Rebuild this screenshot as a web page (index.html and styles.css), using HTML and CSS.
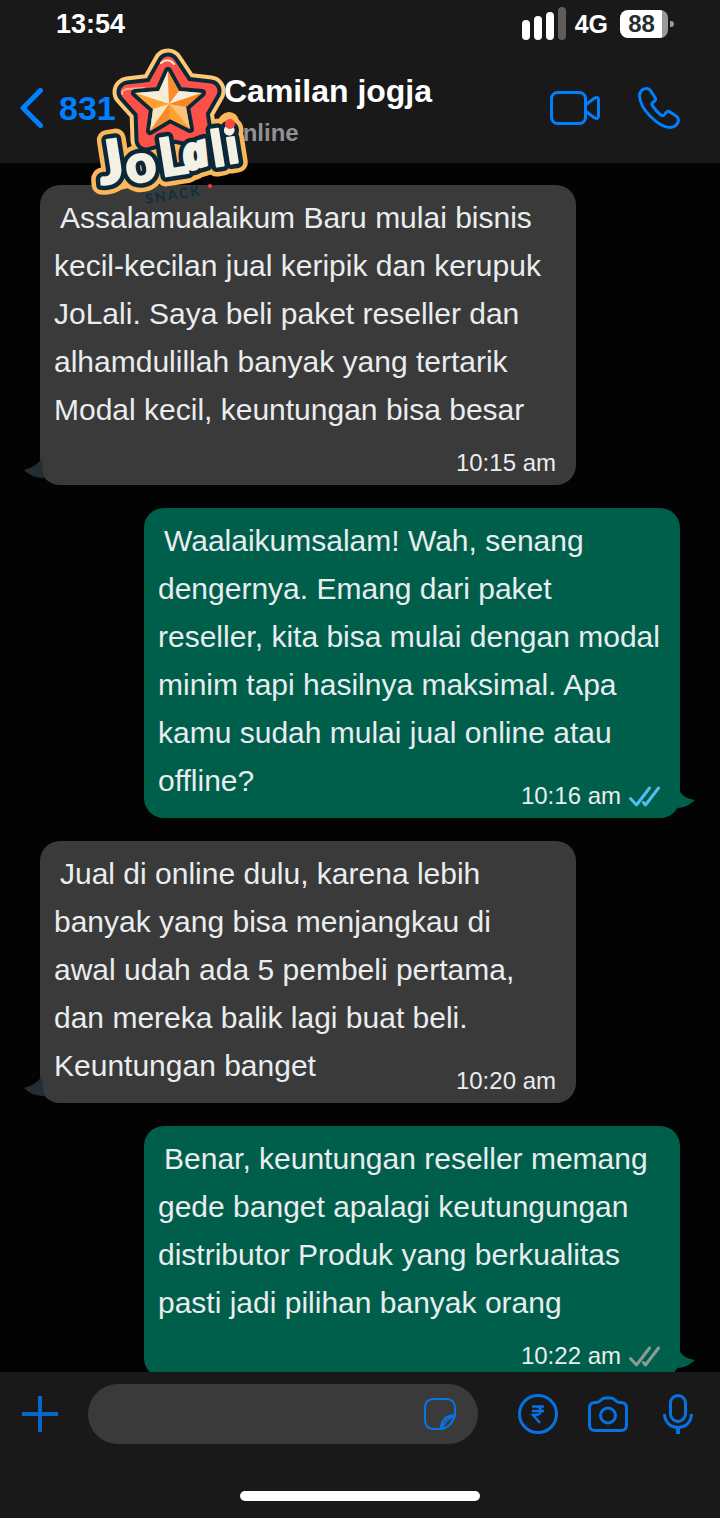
FILE: index.html
```html
<!DOCTYPE html>
<html lang="id">
<head>
  <meta charset="UTF-8" />
  <meta name="viewport" content="width=device-width, initial-scale=1" />
  <title>Camilan jogja</title>
  <link rel="stylesheet" href="styles.css">
</head>
<body>

  <header class="header">
    <div class="status-bar">
      <span class="clock">13:54</span>
      <div class="status-right">
        <svg class="signal" width="44" height="34" viewBox="0 0 44 34">
          <g fill="#fff">
            <rect x="0" y="13" width="8" height="20" rx="4"/>
            <rect x="12" y="9" width="8" height="24" rx="4"/>
            <rect x="24" y="5" width="8" height="28" rx="4"/>
          </g>
          <rect x="36" y="0" width="8" height="33" rx="4" fill="#5d5d5d"/>
        </svg>
        <span class="network">4G</span>
        <span class="battery">88</span>
      </div>
    </div>

    <div class="nav">
      <a class="back" href="#">
        <svg width="24" height="40" viewBox="0 0 24 40" fill="none" stroke="#007fff" stroke-width="5" stroke-linecap="round" stroke-linejoin="round"><path d="M20.500 2.500L3 20L20.500 37.500"/></svg>
        831
      </a>
      <div class="contact">
        <h1>Camilan jogja</h1>
        <p>Online</p>
      </div>
      <button class="icon-btn" aria-label="Video call">
        <svg width="50" height="34" viewBox="0 0 50 34" fill="none" stroke="#007fff" stroke-width="3" stroke-linejoin="round"><rect x="1.500" y="1.500" width="34" height="31" rx="6"/><path d="M35.500 14L44 7.500Q48.500 5 48.500 9V25Q48.500 29 44 26.500L35.500 20Z"/></svg>
      </button>
      <button class="icon-btn" aria-label="Call">
        <svg width="42" height="42" viewBox="0 0 42 42" fill="none" stroke="#007fff" stroke-width="3" stroke-linejoin="round"><path d="M8 1.500C4 1.500 1.500 5 1.500 9C2 17 7 24 12.500 29.500C18 35 25 40.500 32 40.500C37 40.500 40.500 36.500 40.500 33C40.500 31 39.500 30 38 29L32 25C30.500 24 29 24.300 28 25.600L26.500 27.600C25.500 29 24.500 29 23.200 28.200C20 26 17 22.500 14.300 18.500C13.500 17 13.500 16.500 14.800 15.400L16.600 14C18 12.800 17.700 11.500 16.800 10.200L12.500 3.500C11.500 2 10 1.500 8 1.500Z"/></svg>
      </button>
    </div>

    <svg class="logo" width="180" height="180" viewBox="0 0 180 180" role="img" aria-label="JoLali Snack">
      <defs>
        <path id="star" d="M88 24L104 48L130 51L118 72L122 98L95 92L66 100L65 71L48 52L74 49Z"/>
        <g id="word" font-family="Lato, 'Open Sans', sans-serif" font-weight="900">
          <text font-size="60" transform="translate(21 145) rotate(-9)">J</text>
          <text font-size="53" transform="translate(48 144) rotate(-9)">o</text>
          <text font-size="53" transform="translate(82 137) rotate(-9)">L</text>
          <text font-size="46" font-family="'Open Sans', sans-serif" font-weight="800" font-style="italic" transform="translate(106 132) rotate(-18)">a</text>
          <text font-size="50" transform="translate(134 127) rotate(-9)">l</text>
          <text font-size="50" transform="translate(148 124) rotate(-9)">i</text>
        </g>
      </defs>
      <g stroke-linejoin="round" stroke-linecap="round">
        <use href="#star" fill="#ffc875" stroke="#ffc875" stroke-width="31"/>
        <use href="#word" fill="#fdb75b" stroke="#fdb75b" stroke-width="20"/>
        <path d="M38 136L142 112" stroke="#fdb75b" stroke-width="28"/>
        <path d="M120 114L149 82L153 114Z" fill="#fdb75b" stroke="#fdb75b" stroke-width="20"/>
        <use href="#star" fill="#0b2838" stroke="#0b2838" stroke-width="23"/>
        <use href="#star" fill="#fb5148" stroke="#fb5148" stroke-width="15"/>
        <path d="M81 23Q88 17 94 24" fill="none" stroke="#fff0d6" stroke-width="2"/>
        <path d="M42 54Q42 50 47 49L64 48" fill="none" stroke="#ffb09b" stroke-width="2"/>
        <path d="M88 31L99 51L122 53L106 67L110 89L90 79L70 91L73 69L55 53L79 51Z" fill="#0b2838" stroke="#0b2838" stroke-width="8"/>
      </g>
      <g>
        <path d="M88 31L99 51L122 53L106 67L110 89L90 79L70 91L73 69L55 53L79 51Z" fill="#ffa12e"/>
        <path d="M88 31L79 51L89 64Z" fill="#f5eedc"/>
        <path d="M88 31L99 51L89 64Z" fill="#f98d2c"/>
        <path d="M55 53L79 51L89 64Z" fill="#f5eedc"/>
        <path d="M55 53L73 69L89 64Z" fill="#ffa12e"/>
        <path d="M122 53L99 51L89 64Z" fill="#f5eedc"/>
        <path d="M122 53L106 67L89 64Z" fill="#f98422"/>
        <path d="M70 91L73 69L89 64Z" fill="#f7e5c4"/>
        <path d="M70 91L90 79L89 64Z" fill="#f98d2c"/>
        <path d="M110 89L106 67L89 64Z" fill="#fcc27b"/>
        <path d="M110 89L90 79L89 64Z" fill="#ffa12e"/>
      </g>
      <g stroke-linejoin="round">
        <use href="#word" fill="#0b2838" stroke="#0b2838" stroke-width="11"/>
        <use href="#word" fill="#f3f0e4" stroke="#f3f0e4" stroke-width="2"/>
      </g>
      <circle cx="150" cy="84" r="5" fill="#f6483f"/>
      <text class="logo-sub" transform="translate(66 164) rotate(-9)">SNACK</text>
      <circle cx="130" cy="146" r="2" fill="#fb3b35"/>
    </svg>
  </header>

  <main class="chat">
    <div class="bubble received">
      <p>Assalamualaikum Baru mulai bisnis kecil-kecilan jual keripik dan kerupuk JoLali. Saya beli paket reseller dan alhamdulillah banyak yang tertarik Modal kecil, keuntungan bisa besar</p>
      <div class="meta">10:15 am</div>
      <svg class="tail" width="20" height="22" viewBox="0 0 20 22"><path d="M18 0C16 6 8 11 0 13C6 19 13 21 20 21Q18 10 18 0Z" fill="#232d34"/></svg>
    </div>

    <div class="bubble sent">
      <p>Waalaikumsalam! Wah, senang dengernya. Emang dari paket reseller, kita bisa mulai dengan modal minim tapi hasilnya maksimal. Apa kamu sudah mulai jual online atau offline?</p>
      <div class="meta beside">10:16 am
        <svg class="ticks read" width="31" height="21" viewBox="0 0 31 21"><path d="M1.500 12.500L7.500 19L20.500 2M14.500 16.500L16.500 19L29.500 2"/></svg>
      </div>
      <svg class="tail" width="20" height="22" viewBox="0 0 20 22"><path d="M3 0C6 6 12 9 19 10C14 15 8 18 0 18Z" fill="#005f4b"/></svg>
    </div>

    <div class="bubble received">
      <p>Jual di online dulu, karena lebih banyak yang bisa menjangkau di awal udah ada 5 pembeli pertama, dan mereka balik lagi buat beli. Keuntungan banget</p>
      <div class="meta beside">10:20 am</div>
      <svg class="tail" width="20" height="22" viewBox="0 0 20 22"><path d="M18 0C16 6 8 11 0 13C6 19 13 21 20 21Q18 10 18 0Z" fill="#232d34"/></svg>
    </div>

    <div class="bubble sent">
      <p>Benar, keuntungan reseller memang gede banget apalagi keutungungan distributor Produk yang berkualitas pasti jadi pilihan banyak orang</p>
      <div class="meta">10:22 am
        <svg class="ticks" width="31" height="21" viewBox="0 0 31 21"><path d="M1.500 12.500L7.500 19L20.500 2M14.500 16.500L16.500 19L29.500 2"/></svg>
      </div>
      <svg class="tail" width="20" height="22" viewBox="0 0 20 22"><path d="M3 0C6 6 12 9 19 10C14 15 8 18 0 18Z" fill="#005f4b"/></svg>
    </div>
  </main>

  <footer class="footer">
    <div class="composer">
      <button class="icon-btn" aria-label="Tambah">
        <svg width="36" height="36" viewBox="0 0 36 36" stroke="#0a66c8" stroke-width="4"><path d="M18 0V36M0 18H36"/></svg>
      </button>
      <div class="field">
        <input type="text" aria-label="Pesan">
        <button class="icon-btn" aria-label="Stiker">
          <svg width="32" height="32" viewBox="0 0 32 32" fill="none" stroke="#0874e6" stroke-width="2" stroke-linejoin="round"><path d="M10 1H22C28 1 31 5 31 10V18C27 27 24 30 17 31H10C4 31 1 28 1 22V10C1 4 4 1 10 1Z"/><path d="M17 31Q17 18 31 17M18 30Q22 20 31 18"/></svg>
        </button>
      </div>
      <button class="icon-btn" aria-label="Pembayaran">
        <svg width="40" height="40" viewBox="0 0 40 40" fill="none" stroke="#0672e4" stroke-width="3"><circle cx="20" cy="20" r="18.500"/><path d="M14 12.500H26M14 17H26M15 12.500H18C24.500 12.500 24.500 21 18 21H15L22 29" stroke-width="2.500"/></svg>
      </button>
      <button class="icon-btn" aria-label="Kamera">
        <svg width="40" height="40" viewBox="0 0 40 40" fill="none" stroke="#0672e4" stroke-width="3" stroke-linejoin="round"><path d="M7 8.500H9C12 8.500 13 4 17 4H23C27 4 28 8.500 31 8.500H33Q38.500 8.500 38.500 14V31Q38.500 36.500 33 36.500H7Q1.500 36.500 1.500 31V14Q1.500 8.500 7 8.500Z"/><circle cx="20" cy="21.500" r="7.500"/></svg>
      </button>
      <button class="icon-btn" aria-label="Rekam suara">
        <svg width="30" height="40" viewBox="0 0 30 40" fill="none" stroke="#0672e4" stroke-width="3"><rect x="7.500" y="1.500" width="15" height="26" rx="7.500"/><path d="M1.500 20C2 38 28 38 28.500 20"/><path d="M15 33V40" stroke-width="4"/></svg>
      </button>
    </div>
    <div class="home-bar"></div>
  </footer>

</body>
</html>
```
FILE: styles.css
```css
* {
  box-sizing: border-box;
}
body {
  margin: 0;
  height: 100vh;
  display: flex;
  flex-direction: column;
  background: #030303;
  color: #e9edef;
  font-family: "Liberation Sans", Arial, sans-serif;
}
h1, p {
  margin: 0;
}
svg {
  display: block;
  flex: none;
}
button {
  flex: none;
  padding: 0;
  border: none;
  background: none;
  cursor: pointer;
}

/* header */
.header {
  position: relative;
  z-index: 1;
  background: #191919;
  padding-bottom: 12px;
}
.status-bar {
  display: flex;
  justify-content: space-between;
  align-items: center;
  height: 48px;
  padding: 0 52px 0 56px;
  color: #fff;
  font-weight: bold;
}
.clock {
  font-size: 27px;
}
.status-right {
  display: flex;
  align-items: center;
  gap: 9px;
  font-size: 25px;
}
.battery {
  position: relative;
  width: 48px;
  margin-left: 3px;
  padding-right: 5px;
  border-radius: 8px;
  background: linear-gradient(to right, #fff 42px, #9a9a9a 42px);
  color: #252d2f;
  font-size: 24px;
  line-height: 28px;
  text-align: center;
}
.battery::after {
  content: "";
  position: absolute;
  top: 11px;
  right: -6px;
  width: 4px;
  height: 6px;
  border-radius: 0 4px 4px 0;
  background: #9a9a9a;
}
.nav {
  display: flex;
  align-items: center;
  padding: 17px 40px 0 20px;
}
.back {
  display: flex;
  align-items: center;
  gap: 15px;
  width: 204px;
  color: #007fff;
  font-size: 34px;
  font-weight: bold;
  text-decoration: none;
}
.contact {
  flex: 1;
  padding-top: 3px;
}
.contact h1 {
  color: #fff;
  font-size: 32px;
  line-height: 47px;
}
.contact p {
  color: #919195;
  font-size: 24px;
  font-weight: bold;
  line-height: 36px;
}
.nav .icon-btn {
  margin-left: 38px;
}
.logo {
  position: absolute;
  top: 40px;
  left: 80px;
}
.logo-sub {
  fill: #10303d;
  font-family: Lato, sans-serif;
  font-size: 14px;
  font-weight: 900;
  letter-spacing: 2px;
}

/* messages */
.chat {
  flex: 1;
  min-height: 0;
  overflow: hidden auto;
  scrollbar-width: none;
  display: flex;
  flex-direction: column;
  gap: 23px;
  padding: 22px 40px 0;
}
.bubble {
  position: relative;
  flex: none;
  width: 84%;
  max-width: 536px;
  padding: 9px 20px 8px 14px;
  border-radius: 20px;
}
.bubble p {
  font-size: 30px;
  line-height: 48px;
  text-indent: 6px;
}
.received {
  background: #3a3a3a;
}
.sent {
  align-self: flex-end;
  background: #005f4b;
}
.meta {
  display: flex;
  justify-content: flex-end;
  align-items: center;
  gap: 8px;
  margin-top: 15px;
  font-size: 24px;
  line-height: 28px;
}
.meta.beside {
  margin-top: -23px;
}
.ticks {
  fill: none;
  stroke: #8d9b97;
  stroke-width: 3px;
  stroke-linecap: round;
  stroke-linejoin: round;
}
.ticks.read {
  stroke: #53bdeb;
}
.tail {
  position: absolute;
  bottom: 6px;
}
.received .tail {
  left: -16px;
}
.sent .tail {
  right: -16px;
}

/* footer */
.footer {
  background: #191919;
  padding: 12px 22px 17px;
}
.composer {
  display: flex;
  align-items: center;
  gap: 30px;
  padding-right: 5px;
}
.field {
  flex: 1;
  min-width: 0;
  display: flex;
  align-items: center;
  height: 60px;
  margin-right: 10px;
  padding: 0 22px;
  border-radius: 30px;
  background: #3a3a3a;
}
.field input {
  flex: 1;
  min-width: 0;
  border: none;
  outline: none;
  background: none;
  color: #e9edef;
  font: inherit;
  font-size: 30px;
}
.composer > .icon-btn:last-child {
  margin-left: 5px;
}
.home-bar {
  width: 240px;
  height: 10px;
  margin: 47px auto 0;
  border-radius: 5px;
  background: #fff;
}
```
